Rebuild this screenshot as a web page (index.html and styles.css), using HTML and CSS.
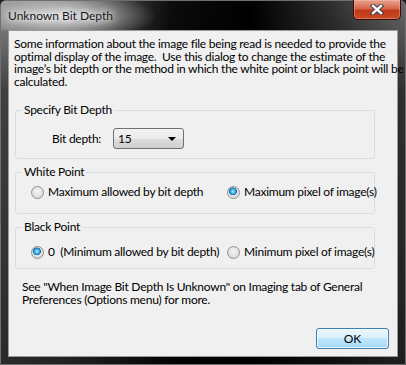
FILE: index.html
```html
<!DOCTYPE html>
<html lang="en">
<head>
    <meta charset="utf-8" />
    <title>Unknown Bit Depth</title>
    <link rel="stylesheet" href="styles.css">
</head>
<body>
    <div class="window">
        <div class="titlebar">
            <span class="title-text">Unknown Bit Depth</span>
            <button class="close-button" aria-label="Close">
                <svg width="14" height="11" viewBox="0 0 14 11">
                    <path d="M3 2 L11 9 M11 2 L3 9" stroke="#3a3f4a" stroke-width="4.4" stroke-linecap="square" fill="none" />
                    <path d="M3 2 L11 9 M11 2 L3 9" stroke="#ffffff" stroke-width="2.4" stroke-linecap="square" fill="none" />
                </svg>
            </button>
        </div>

        <div class="client">
            <p class="intro">
                Some information about the image file being read is needed to provide the<br>
                optimal display of the image.&nbsp; Use this dialog to change the estimate of the<br>
                image’s bit depth or the method in which the white point or black point will be<br>
                calculated.
            </p>

            <div class="group group-depth">
                <span class="group-title">Specify Bit Depth</span>
                <div class="depth-row">
                    <span class="depth-label">Bit depth:</span>
                    <div class="combo">
                        <span>15</span>
                        <span class="combo-arrow"></span>
                    </div>
                </div>
            </div>

            <div class="group group-white">
                <span class="group-title">White Point</span>
                <div class="radio-row">
                    <label class="radio"><span class="radio-dot"></span>Maximum allowed by bit depth</label>
                    <label class="radio"><span class="radio-dot checked"></span>Maximum pixel of image(s)</label>
                </div>
            </div>

            <div class="group group-black">
                <span class="group-title">Black Point</span>
                <div class="radio-row">
                    <label class="radio"><span class="radio-dot checked"></span>0&nbsp; (Minimum allowed by bit depth)</label>
                    <label class="radio"><span class="radio-dot"></span>Minimum pixel of image(s)</label>
                </div>
            </div>

            <p class="note">
                See "When Image Bit Depth Is Unknown" on Imaging tab of General<br>
                Preferences (Options menu) for more.
            </p>

            <div class="buttons">
                <button class="ok-button">OK</button>
            </div>
        </div>
    </div>
</body>
</html>
```

FILE: styles.css
```css
body {
    margin: 0;
    background: #1b1b1b;
    font-family: Lato, "Noto Sans", sans-serif;
    font-size: 12px;
    letter-spacing: -0.25px;
    color: #000;
}

.window {
    width: 406px;
    height: 365px;
    box-sizing: border-box;
    display: flex;
    flex-direction: column;
    border: 1px solid #6f6f6f;
    border-radius: 6px 6px 0 0;
    background:
        linear-gradient(180deg, rgba(0, 0, 0, 0) 0, rgba(0, 0, 0, 0.55) 90px, rgba(0, 0, 0, 0.7) 100%),
        linear-gradient(90deg, #8f8f8f 0%, #6c6c6c 18%, #0c0c0c 42%, #000 62%, #303030 82%, #6a6a6a 100%);
}

.titlebar {
    height: 29px;
    display: flex;
    align-items: flex-start;
    justify-content: space-between;
    padding-left: 7px;
    background: radial-gradient(ellipse 95px 26px at 60px 15px, rgba(230, 230, 230, 0.9), rgba(200, 200, 200, 0) 100%);
}

.title-text {
    margin-top: 7px;
    font-size: 12px;
    letter-spacing: 0;
    color: #1a1a1a;
    text-shadow: 0 0 6px #fff, 0 0 10px #fff;
}

.close-button {
    width: 48px;
    height: 20px;
    margin: -1px 4px 0 0;
    padding: 0;
    border: 1px solid #3b0d06;
    border-top: none;
    border-radius: 0 0 5px 5px;
    background: linear-gradient(180deg, #e8a392 0%, #d6674c 45%, #c1391a 55%, #c94a26 100%);
    box-shadow: inset 0 0 0 1px rgba(255, 200, 180, 0.35);
    display: flex;
    align-items: center;
    justify-content: center;
}

.client {
    flex: 1;
    margin: 0 7px 7px;
    border: 1px solid #9a9a9a;
    background: #f0f0f0;
    padding: 7px 8px 7px 5px;
    display: flex;
    flex-direction: column;
}

.intro,
.note {
    margin: 0;
    line-height: 12.5px;
    white-space: nowrap;
}

.group {
    border: 1px solid #d5dfe5;
    border-radius: 3px;
    margin: 0 14px 0 1px;
    display: flex;
    flex-direction: column;
    align-items: flex-start;
}

.group-title {
    margin: -8px 0 0 6px;
    padding: 0 2px;
    line-height: 14px;
    background: #f0f0f0;
}

.group-depth {
    margin-top: 22px;
    padding-bottom: 9px;
}

.group-white {
    margin-top: 13px;
    padding-bottom: 14px;
}

.group-black {
    margin-top: 13px;
    padding-bottom: 9px;
}

.depth-row {
    display: flex;
    align-items: center;
    gap: 12px;
    margin: 11px 0 0 36px;
}

.combo {
    width: 71px;
    height: 21px;
    box-sizing: border-box;
    border: 1px solid #707070;
    border-radius: 3px;
    background: linear-gradient(180deg, #f3f3f3 0%, #ebebeb 50%, #dddddd 51%, #cfcfcf 100%);
    display: flex;
    align-items: center;
    justify-content: space-between;
    padding: 0 7px 0 4px;
}

.combo-arrow {
    width: 0;
    height: 0;
    border-left: 4px solid transparent;
    border-right: 4px solid transparent;
    border-top: 4px solid #000;
}

.radio-row {
    display: grid;
    grid-template-columns: 196px auto;
    width: 100%;
    line-height: 14px;
}

.group-white .radio-row {
    margin-top: 6px;
}

.group-black .radio-row {
    margin-top: 11px;
}

.radio {
    display: flex;
    align-items: center;
    gap: 4px;
    padding-left: 15px;
    white-space: nowrap;
}

.radio-dot {
    flex: none;
    width: 11px;
    height: 11px;
    border-radius: 50%;
    border: 1px solid #8e8f8f;
    background: radial-gradient(circle at 50% 40%, #f6f6f6 0%, #dcdcdc 70%, #cfcfcf 100%);
}

.radio-dot.checked {
    background:
        radial-gradient(circle at 45% 40%, #b9ecff 0%, #2ea8e8 28%, #165f9c 42%, rgba(0, 0, 0, 0) 46%),
        radial-gradient(circle at 50% 40%, #f6f6f6 0%, #dcdcdc 70%, #cfcfcf 100%);
}

.note {
    margin: 12px 0 0 8px;
}

.buttons {
    margin-top: auto;
    display: flex;
    justify-content: flex-end;
}

.ok-button {
    width: 73px;
    height: 21px;
    border: 1px solid #3c7fb1;
    border-radius: 3px;
    background: linear-gradient(180deg, #eaf6fd 0%, #d9f0fc 45%, #bee6fd 50%, #a7d9f5 100%);
    box-shadow: inset 0 0 0 1px rgba(255, 255, 255, 0.7);
    font-family: Lato, "Noto Sans", sans-serif;
    font-size: 12px;
    color: #000;
    padding: 0;
}
```
